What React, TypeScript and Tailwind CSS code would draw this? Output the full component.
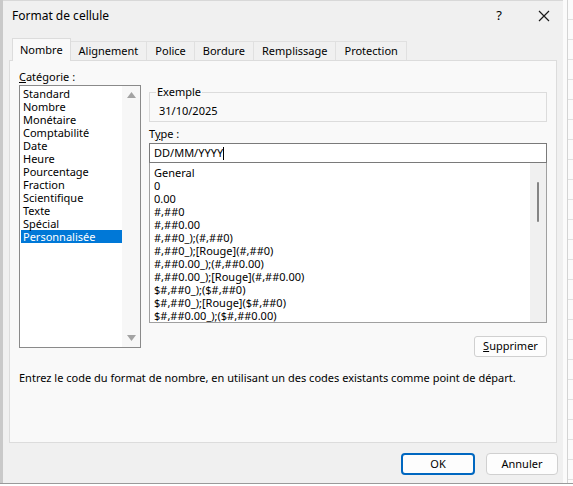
import React from 'react'

const categories = [
  'Standard',
  'Nombre',
  'Monétaire',
  'Comptabilité',
  'Date',
  'Heure',
  'Pourcentage',
  'Fraction',
  'Scientifique',
  'Texte',
  'Spécial',
  'Personnalisée',
]

const formats = [
  'General',
  '0',
  '0.00',
  '#,##0',
  '#,##0.00',
  '#,##0_);(#,##0)',
  '#,##0_);[Rouge](#,##0)',
  '#,##0.00_);(#,##0.00)',
  '#,##0.00_);[Rouge](#,##0.00)',
  '$#,##0_);($#,##0)',
  '$#,##0_);[Rouge]($#,##0)',
  '$#,##0.00_);($#,##0.00)',
]

const tabs = ['Nombre', 'Alignement', 'Police', 'Bordure', 'Remplissage', 'Protection']

function Arrow({ down }: { down?: boolean }) {
  return (
    <svg width="9" height="6" viewBox="0 0 9 6">
      <path d={down ? 'M0 0 L9 0 L4.5 6 Z' : 'M0 6 L9 6 L4.5 0 Z'} fill="#a3a3a3" />
    </svg>
  )
}

export default function App() {
  return (
    <div
      className="w-[573px] h-[486px] flex flex-col overflow-hidden bg-[#fafafa] text-black"
      style={{ fontFamily: '"Noto Sans", "Open Sans", sans-serif' }}
    >
      <div className="flex h-[483px]">
        {/* left edge of the window behind */}
        <div className="w-[3px] bg-[#c9c9c9]" />

        {/* Dialog */}
        <div className="w-[560px] flex flex-col bg-[#f0f0f0] border-t border-[#d8d8d8]">
          {/* Title bar */}
          <div className="h-[30px] flex items-center pl-[9px] pr-[13px]">
            <span className="text-[12px] flex-1">Format de cellule</span>
            <span className="text-[13px] mr-[36px]">?</span>
            <svg width="12" height="12" viewBox="0 0 12 12">
              <path d="M1 1 L11 11 M11 1 L1 11" stroke="#1a1a1a" strokeWidth="1.2" />
            </svg>
          </div>

          <div className="flex flex-col px-[6px] text-[11px]">
            {/* Tabs */}
            <div className="flex items-end h-[29px] pl-[3px] relative z-10">
              {tabs.map((t, i) =>
                i === 0 ? (
                  <div
                    key={t}
                    className="h-[23px] px-[7px] flex items-center bg-[#f9f9f9] border border-b-0 border-[#dcdcdc] -mb-px"
                  >
                    {t}
                  </div>
                ) : (
                  <div
                    key={t}
                    className="h-[19px] px-[8px] flex items-center border-r border-t border-[#e0e0e0] bg-[#f0f0f0]"
                  >
                    {t}
                  </div>
                )
              )}
            </div>

            {/* Panel */}
            <div className="h-[383px] bg-[#f9f9f9] border border-[#dcdcdc] px-[9px] pt-[8px] flex flex-col">
              <div className="flex gap-[8px]">
                {/* Catégorie */}
                <div className="flex flex-col w-[122px]">
                  <div className="h-[16px] leading-[16px]">
                    <span className="underline">C</span>atégorie :
                  </div>
                  <div className="h-[263px] border border-[#8a8a8a] bg-white flex">
                    <div className="flex-1 pt-[1px] pl-[1px]">
                      {categories.map((c, i) => (
                        <div
                          key={c}
                          className={`h-[13px] leading-[13px] pl-[2px] ${
                            i === categories.length - 1 ? 'bg-[#0078d7] text-white' : ''
                          }`}
                        >
                          {c}
                        </div>
                      ))}
                    </div>
                    <div className="w-[18px] bg-[#f7f7f7] flex flex-col items-center justify-between py-[6px]">
                      <Arrow />
                      <Arrow down />
                    </div>
                  </div>
                </div>

                {/* Right column */}
                <div className="flex-1 flex flex-col pt-[16px]">
                  <fieldset className="border border-[#dcdcdc] h-[37px] px-[6px]">
                    <legend className="px-[1px] leading-[14px]">Exemple</legend>
                    <div className="pl-[3px] mt-[5px] leading-[14px]">31/10/2025</div>
                  </fieldset>
                  <div className="mt-[5px] h-[14px] leading-[14px]">
                    T<span className="underline">y</span>pe :
                  </div>
                  <div className="mt-[2px] h-[20px] border border-[#7a7a7a] bg-white flex items-center pl-[4px]">
                    DD/MM/YYYY<span className="inline-block w-px h-[13px] bg-black" />
                  </div>
                  <div className="h-[160px] border border-t-0 border-[#a0a0a0] bg-white flex">
                    <div className="flex-1 pt-[3px] pl-[4px]">
                      {formats.map((f) => (
                        <div key={f} className="h-[13px] leading-[13px] whitespace-nowrap">
                          {f}
                        </div>
                      ))}
                    </div>
                    <div className="w-[16px] bg-[#f0f0f0] flex justify-center pt-[19px]">
                      <div className="w-[2px] h-[40px] bg-[#858585] rounded-full" />
                    </div>
                  </div>
                  <div className="flex justify-end mt-[13px]">
                    <button className="h-[21px] w-[73px] border border-[#d0d0d0] rounded-[3px] bg-[#fdfdfd]">
                      <span className="underline">S</span>upprimer
                    </button>
                  </div>
                </div>
              </div>
              <div className="mt-[13px] leading-[16px] whitespace-nowrap">
                Entrez le code du format de nombre, en utilisant un des codes existants comme point de départ.
              </div>
            </div>

            {/* Footer buttons */}
            <div className="flex justify-end gap-[11px] mt-[10px] -mr-[1px]">
              <button className="h-[22px] w-[74px] border-2 border-[#0067c0] rounded-[4px] bg-[#fdfdfd]">
                OK
              </button>
              <button className="h-[22px] w-[72px] border border-[#d0d0d0] rounded-[4px] bg-[#fdfdfd]">
                Annuler
              </button>
            </div>
          </div>
        </div>

        {/* spreadsheet behind, right side */}
        <div className="flex-1 flex bg-[#fbfbfb]">
          <div className="w-[4px]" />
          <div className="w-px bg-[#d4d4d4]" />
          <div className="flex-1 flex flex-col">
            {Array.from({ length: 24 }).map((_, i) => (
              <div key={i} className="h-[20px] border-b border-[#e1e1e1]" />
            ))}
          </div>
        </div>
      </div>
      {/* strip below the dialog */}
      <div className="flex-1 bg-white border-t border-[#9a9a9a]" />
    </div>
  )
}
